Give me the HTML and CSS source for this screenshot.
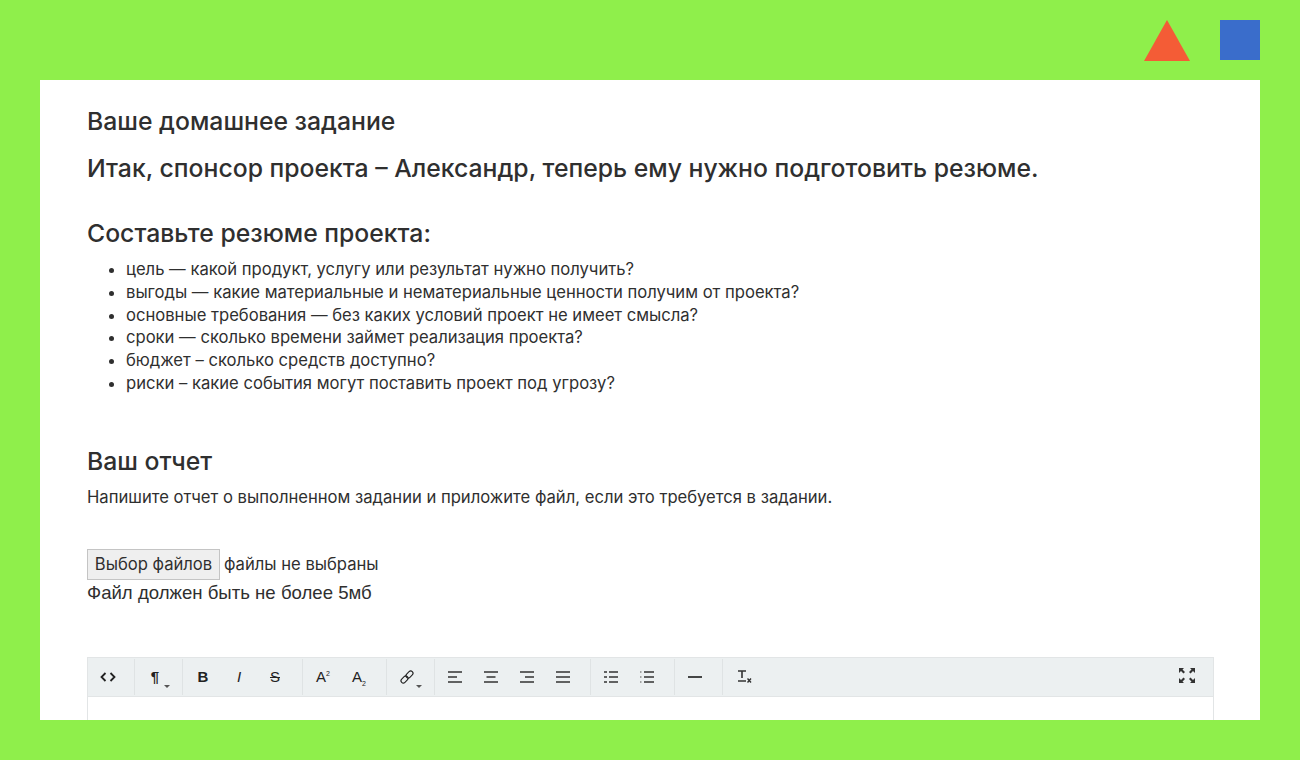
FILE: index.html
```html
<!DOCTYPE html>
<html lang="ru">
<head>
    <meta charset="UTF-8">
    <title>Домашнее задание</title>
    <link rel="stylesheet" href="styles.css">
</head>
<body>

    <div class="top-bar">
        <svg class="triangle" width="46" height="41" viewBox="0 0 46 41"><polygon points="23,0 46,41 0,41" fill="#f45c36"/></svg>
        <div class="square"></div>
    </div>

    <div class="panel">
        <h3 class="title">Ваше домашнее задание</h3>
        <h3 class="lead">Итак, спонсор проекта – Александр, теперь ему нужно подготовить резюме.</h3>
        <h3 class="sub">Составьте резюме проекта:</h3>
        <ul class="tasks">
            <li>цель — какой продукт, услугу или результат нужно получить?</li>
            <li>выгоды — какие материальные и нематериальные ценности получим от проекта?</li>
            <li>основные требования — без каких условий проект не имеет смысла?</li>
            <li>сроки — сколько времени займет реализация проекта?</li>
            <li>бюджет – сколько средств доступно?</li>
            <li>риски – какие события могут поставить проект под угрозу?</li>
        </ul>

        <h3 class="report">Ваш отчет</h3>
        <p class="hint">Напишите отчет о выполненном задании и приложите файл, если это требуется в задании.</p>

        <div class="file-row">
            <button class="file-btn">Выбор файлов</button>
            <span>файлы не выбраны</span>
        </div>
        <div class="file-note">Файл должен быть не более 5мб</div>

        <div class="editor">
            <div class="toolbar">
                <div class="group">
                    <span class="tool"><svg width="16" height="10" viewBox="0 0 16 10"><path d="M5.500 1 1.500 5l4 4M10.500 1l4 4-4 4" fill="none" stroke="#222" stroke-width="1.800"/></svg></span>
                </div>
                <div class="group">
                    <span class="tool tool-drop para">¶</span>
                </div>
                <div class="group">
                    <span class="tool"><b>B</b></span>
                    <span class="tool"><i>I</i></span>
                    <span class="tool"><s>S</s></span>
                </div>
                <div class="group">
                    <span class="tool"><span>A<sup>2</sup></span></span>
                    <span class="tool"><span>A<sub>2</sub></span></span>
                </div>
                <div class="group">
                    <span class="tool tool-drop"><svg width="16" height="16" viewBox="0 0 16 16"><g fill="none" stroke="#222" stroke-width="1.100" transform="rotate(-45 8 8)"><rect x="0.500" y="5.700" width="8" height="4.600" rx="2.300"/><rect x="7.500" y="5.700" width="8" height="4.600" rx="2.300"/></g></svg></span>
                </div>
                <div class="group">
                    <span class="tool"><svg width="14" height="12" viewBox="0 0 14 12"><path d="M0 1h14M0 6h9M0 11h14" stroke="#333" stroke-width="1.700"/></svg></span>
                    <span class="tool"><svg width="14" height="12" viewBox="0 0 14 12"><path d="M0 1h14M2.500 6h9M0 11h14" stroke="#333" stroke-width="1.700"/></svg></span>
                    <span class="tool"><svg width="14" height="12" viewBox="0 0 14 12"><path d="M0 1h14M5 6h9M0 11h14" stroke="#333" stroke-width="1.700"/></svg></span>
                    <span class="tool"><svg width="14" height="12" viewBox="0 0 14 12"><path d="M0 1h14M0 6h14M0 11h14" stroke="#333" stroke-width="1.700"/></svg></span>
                </div>
                <div class="group">
                    <span class="tool"><svg width="14" height="12" viewBox="0 0 14 12"><path d="M0 1h3M5 1h9M0 6h3M5 6h9M0 11h3M5 11h9" stroke="#333" stroke-width="1.700"/></svg></span>
                    <span class="tool"><svg width="14" height="12" viewBox="0 0 14 12"><path d="M0 1h1.500M0 6h1.500M0 11h1.500" stroke="#888" stroke-width="1.400"/><path d="M4 1h10M4 6h10M4 11h10" stroke="#333" stroke-width="1.700"/></svg></span>
                </div>
                <div class="group">
                    <span class="tool"><svg width="14" height="4" viewBox="0 0 14 4"><path d="M0 2h14" stroke="#333" stroke-width="1.800"/></svg></span>
                </div>
                <div class="group group-last">
                    <span class="tool"><svg width="14" height="13" viewBox="0 0 14 13"><path d="M0 1h8M4 1v7M0 11h8" fill="none" stroke="#333" stroke-width="1.600"/><path d="M9.500 8.500l3.500 4M13 8.500l-3.500 4" stroke="#333" stroke-width="1.400"/></svg></span>
                </div>
                <span class="tool tool-full"><svg width="16" height="15" viewBox="0 0 16 15"><path d="M0 0h5L3.500 1.500 6 4 4.500 5.500 2 3 0 5zM16 0h-5l1.500 1.500L10 4l1.500 1.500L14 3l2 2zM0 15h5l-1.500-1.500L6 11 4.500 9.500 2 12l-2-2zM16 15h-5l1.500-1.500L10 11l1.500-1.500L14 12l2-2z" fill="#333"/></svg></span>
            </div>
            <div class="editor-box"></div>
        </div>
    </div>

</body>
</html>
```

FILE: styles.css
```css
body {
    margin: 0;
    padding: 0 40px 40px;
    box-sizing: border-box;
    height: 760px;
    overflow: hidden;
    background-color: #8fef4b;
    font-family: 'Inter', 'Liberation Sans', sans-serif;
    color: #2f2f2f;
    display: flex;
    flex-direction: column;
}

.top-bar {
    height: 80px;
    flex-shrink: 0;
    display: flex;
    justify-content: flex-end;
    align-items: flex-start;
    gap: 30px;
    padding-top: 20px;
    box-sizing: border-box;
}

.square {
    width: 40px;
    height: 40px;
    background-color: #3a6dcb;
}

.panel {
    flex: 1;
    background: white;
    padding: 0 46px 0 47px;
    overflow: hidden;
    min-height: 0;
}

h3 {
    margin: 0;
    font-weight: 500;
    font-size: 24.750px;
    line-height: 30px;
}

.title {
    margin-top: 26px;
}

.lead {
    margin-top: 17px;
}

.sub {
    margin-top: 35px;
}

.tasks {
    margin: 10px 0 0;
    padding-left: 39px;
    font-size: 16.620px;
    line-height: 22.800px;
}

.report {
    margin-top: 51px;
}

.hint {
    font-size: 16.620px;
    line-height: 24px;
    margin: 9px 0 0;
}

.file-row {
    display: flex;
    align-items: center;
    gap: 4px;
    margin-top: 40px;
    font-size: 16.620px;
}

.file-btn {
    width: 133px;
    height: 31px;
    padding: 0;
    font-family: inherit;
    font-size: 16.620px;
    color: #2f2f2f;
    background: #efefef;
    border: 1px solid #c4c4c4;
}

.file-note {
    font-family: 'Liberation Sans', sans-serif;
    font-size: 18.600px;
    line-height: 24px;
    margin-top: 1px;
}

.editor {
    margin-top: 52px;
    border: 1px solid #e2e5e6;
    border-bottom: none;
}

.toolbar {
    display: flex;
    height: 38px;
    background-color: #ecf0f1;
    border-bottom: 1px solid #e2e5e6;
}

.group {
    display: flex;
    padding: 0 9px 0 2px;
    border-right: 1px solid #dfe3e4;
    margin: 1px 0;
}

.group:first-child {
    padding-right: 8px;
}

.group-last {
    padding-left: 4px;
    border-right: none;
}

.tool {
    position: relative;
    width: 36px;
    height: 36px;
    display: flex;
    align-items: center;
    justify-content: center;
    font-family: 'Liberation Sans', sans-serif;
    font-size: 15px;
    color: #222;
}

.tool sup, .tool sub {
    font-size: 7px;
    line-height: 0;
}

.tool-drop::after {
    content: "";
    position: absolute;
    right: 3px;
    bottom: 7px;
    border: 3px solid transparent;
    border-top-color: #555;
    border-bottom: none;
}

.para {
    font-weight: 700;
}

.tool-full {
    margin-left: auto;
    margin-right: 8px;
}

.editor-box {
    height: 60px;
    background: white;
}
```
